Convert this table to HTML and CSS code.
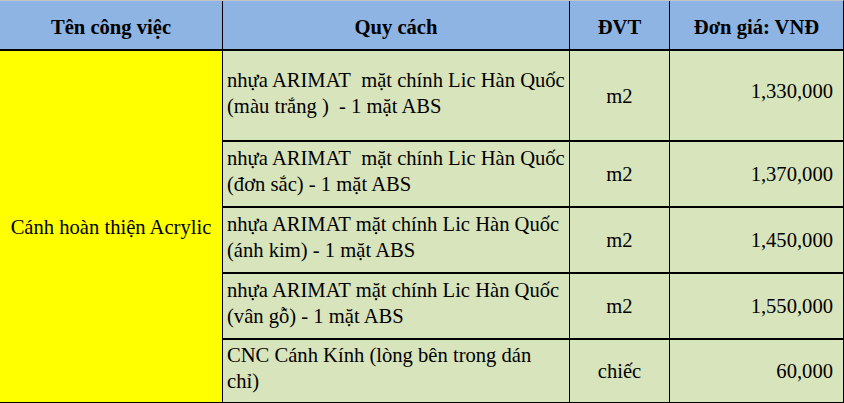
FILE: index.html
```html
<!DOCTYPE html>
<html lang="vi">
<head>
<meta charset="utf-8">
<title>Bảng giá</title>
<link rel="stylesheet" href="styles.css">
</head>
<body>
<div class="sheet">
  <div class="cell head">Tên công việc</div>
  <div class="cell head">Quy cách</div>
  <div class="cell head">ĐVT</div>
  <div class="cell head">Đơn giá: VNĐ</div>

  <div class="cell task">Cánh hoàn thiện Acrylic</div>

  <div class="cell spec">nhựa ARIMAT&nbsp; mặt chính Lic Hàn Quốc<br>(màu trắng )&nbsp; - 1 mặt ABS</div>
  <div class="cell unit">m2</div>
  <div class="cell price raised">1,330,000</div>

  <div class="cell spec">nhựa ARIMAT&nbsp; mặt chính Lic Hàn Quốc<br>(đơn sắc) - 1 mặt ABS</div>
  <div class="cell unit">m2</div>
  <div class="cell price">1,370,000</div>

  <div class="cell spec">nhựa ARIMAT mặt chính Lic Hàn Quốc<br>(ánh kim) - 1 mặt ABS</div>
  <div class="cell unit">m2</div>
  <div class="cell price">1,450,000</div>

  <div class="cell spec">nhựa ARIMAT mặt chính Lic Hàn Quốc<br>(vân gỗ) - 1 mặt ABS</div>
  <div class="cell unit">m2</div>
  <div class="cell price">1,550,000</div>

  <div class="cell spec">CNC Cánh Kính (lòng bên trong dán<br>chỉ)</div>
  <div class="cell unit">chiếc</div>
  <div class="cell price">60,000</div>
</div>
</body>
</html>
```
FILE: styles.css
```css
html, body {
  margin: 0;
  padding: 0;
  background: #ffffff;
}

.sheet {
  width: 843px;
  display: grid;
  grid-template-columns: 222px 346px 99px 173px;
  grid-template-rows: 48px 89px 64px 64px 64px 62px;
  column-gap: 1px;
  row-gap: 2px;
  background: #000000;
  border-top: 1px solid #c4c4c4;
  border-right: 1px solid #000000;
  border-bottom: 1px solid #000000;
  color: #000000;
}

.cell {
  display: flex;
  align-items: center;
  background: #d8e4bc;
  white-space: nowrap;
  font-family: "Liberation Serif", "DejaVu Serif", serif;
  font-size: 20.6px;
  line-height: 26px;
}

.head {
  background: #8db4e2;
  font-weight: bold;
  justify-content: center;
  padding-top: 4px;
}

.task {
  grid-column: 1;
  grid-row: 2 / 7;
  background: #ffff00;
  justify-content: center;
}

.spec {
  padding-left: 4px;
  padding-bottom: 6px;
}

.unit {
  justify-content: center;
}

.price {
  justify-content: flex-end;
  padding-right: 10px;
}

.price.raised {
  padding-bottom: 10px;
}
```
